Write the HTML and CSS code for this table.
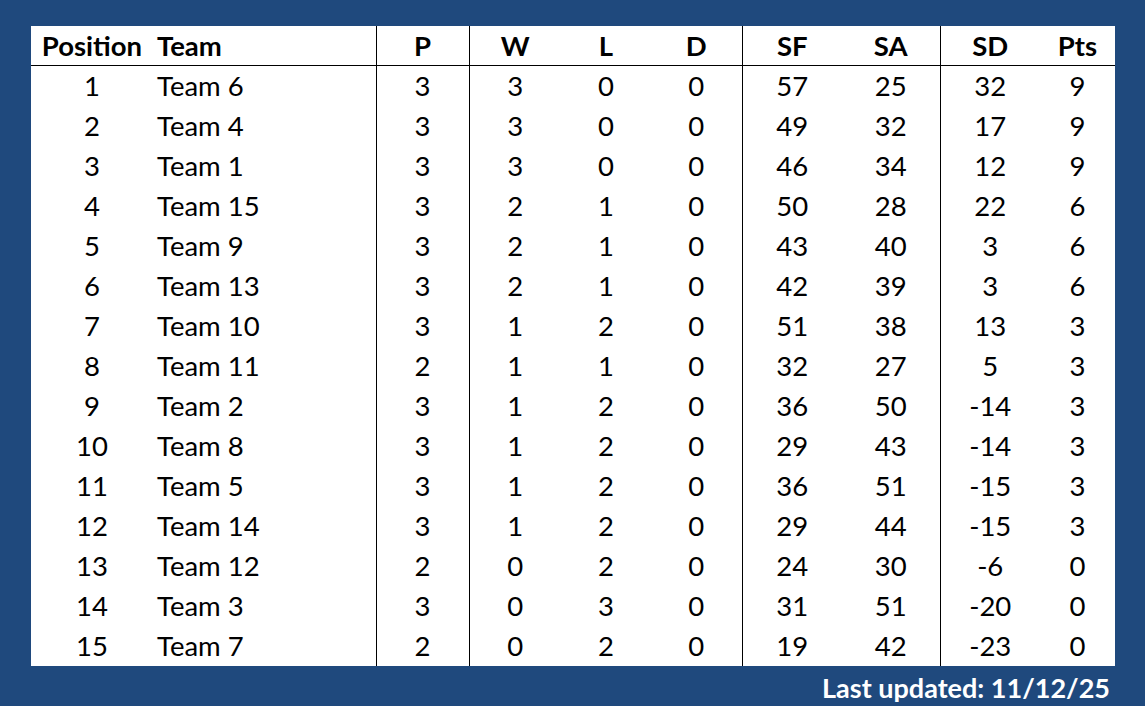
FILE: index.html
```html
<!DOCTYPE html>
<html>
<head>
<meta charset="utf-8">
<link rel="stylesheet" href="styles.css">
</head>
<body>
<div class="page">
  <table class="league">
    <colgroup>
      <col class="c-pos"><col class="c-team"><col class="c-p"><col class="c-w"><col class="c-l"><col class="c-d"><col class="c-sf"><col class="c-sa"><col class="c-sd"><col class="c-pts">
    </colgroup>
    <thead>
      <tr><th>Position</th><th class="team">Team</th><th class="sep">P</th><th class="sep">W</th><th>L</th><th>D</th><th class="sep">SF</th><th>SA</th><th class="sep">SD</th><th>Pts</th></tr>
    </thead>
    <tbody>
      <tr><td>1</td><td class="team">Team 6</td><td class="sep">3</td><td class="sep">3</td><td>0</td><td>0</td><td class="sep">57</td><td>25</td><td class="sep">32</td><td>9</td></tr>
      <tr><td>2</td><td class="team">Team 4</td><td class="sep">3</td><td class="sep">3</td><td>0</td><td>0</td><td class="sep">49</td><td>32</td><td class="sep">17</td><td>9</td></tr>
      <tr><td>3</td><td class="team">Team 1</td><td class="sep">3</td><td class="sep">3</td><td>0</td><td>0</td><td class="sep">46</td><td>34</td><td class="sep">12</td><td>9</td></tr>
      <tr><td>4</td><td class="team">Team 15</td><td class="sep">3</td><td class="sep">2</td><td>1</td><td>0</td><td class="sep">50</td><td>28</td><td class="sep">22</td><td>6</td></tr>
      <tr><td>5</td><td class="team">Team 9</td><td class="sep">3</td><td class="sep">2</td><td>1</td><td>0</td><td class="sep">43</td><td>40</td><td class="sep">3</td><td>6</td></tr>
      <tr><td>6</td><td class="team">Team 13</td><td class="sep">3</td><td class="sep">2</td><td>1</td><td>0</td><td class="sep">42</td><td>39</td><td class="sep">3</td><td>6</td></tr>
      <tr><td>7</td><td class="team">Team 10</td><td class="sep">3</td><td class="sep">1</td><td>2</td><td>0</td><td class="sep">51</td><td>38</td><td class="sep">13</td><td>3</td></tr>
      <tr><td>8</td><td class="team">Team 11</td><td class="sep">2</td><td class="sep">1</td><td>1</td><td>0</td><td class="sep">32</td><td>27</td><td class="sep">5</td><td>3</td></tr>
      <tr><td>9</td><td class="team">Team 2</td><td class="sep">3</td><td class="sep">1</td><td>2</td><td>0</td><td class="sep">36</td><td>50</td><td class="sep">-14</td><td>3</td></tr>
      <tr><td>10</td><td class="team">Team 8</td><td class="sep">3</td><td class="sep">1</td><td>2</td><td>0</td><td class="sep">29</td><td>43</td><td class="sep">-14</td><td>3</td></tr>
      <tr><td>11</td><td class="team">Team 5</td><td class="sep">3</td><td class="sep">1</td><td>2</td><td>0</td><td class="sep">36</td><td>51</td><td class="sep">-15</td><td>3</td></tr>
      <tr><td>12</td><td class="team">Team 14</td><td class="sep">3</td><td class="sep">1</td><td>2</td><td>0</td><td class="sep">29</td><td>44</td><td class="sep">-15</td><td>3</td></tr>
      <tr><td>13</td><td class="team">Team 12</td><td class="sep">2</td><td class="sep">0</td><td>2</td><td>0</td><td class="sep">24</td><td>30</td><td class="sep">-6</td><td>0</td></tr>
      <tr><td>14</td><td class="team">Team 3</td><td class="sep">3</td><td class="sep">0</td><td>3</td><td>0</td><td class="sep">31</td><td>51</td><td class="sep">-20</td><td>0</td></tr>
      <tr><td>15</td><td class="team">Team 7</td><td class="sep">2</td><td class="sep">0</td><td>2</td><td>0</td><td class="sep">19</td><td>42</td><td class="sep">-23</td><td>0</td></tr>
    </tbody>
  </table>
  <div class="updated">Last updated: 11/12/25</div>
</div>
</body>
</html>
```
FILE: styles.css
```css
html, body {
  margin: 0;
  padding: 0;
  background: #1f497d;
  height: 100%;
}
.page {
  padding: 26px 30px 0 31px;
  font-family: Lato, "Open Sans", sans-serif;
}
.league {
  width: 1084px;
  border-collapse: collapse;
  background: #ffffff;
  table-layout: fixed;
  color: #000;
}
.c-pos { width: 122px; }
.c-team { width: 223px; }
.c-p { width: 93px; }
.c-w { width: 92px; }
.c-l { width: 90px; }
.c-d { width: 91px; }
.c-sf { width: 100px; }
.c-sa { width: 98px; }
.c-sd { width: 100px; }
.c-pts { width: 75px; }
.league th, .league td {
  padding: 0;
  text-align: center;
  white-space: nowrap;
  line-height: 1;
}
.league th {
  height: 39px;
  font-size: 27.5px;
  font-weight: 700;
  border-bottom: 1px solid #000;
}
.league td {
  height: 40px;
  font-size: 27.5px;
  font-weight: 400;
}
.league .team {
  text-align: left;
  padding-left: 4px;
}
.league .sep {
  border-left: 1px solid #000;
}
.updated {
  text-align: right;
  padding-right: 5px;
  padding-top: 8px;
  color: #ffffff;
  font-weight: 700;
  font-size: 27px;
  line-height: 1;
}
```
